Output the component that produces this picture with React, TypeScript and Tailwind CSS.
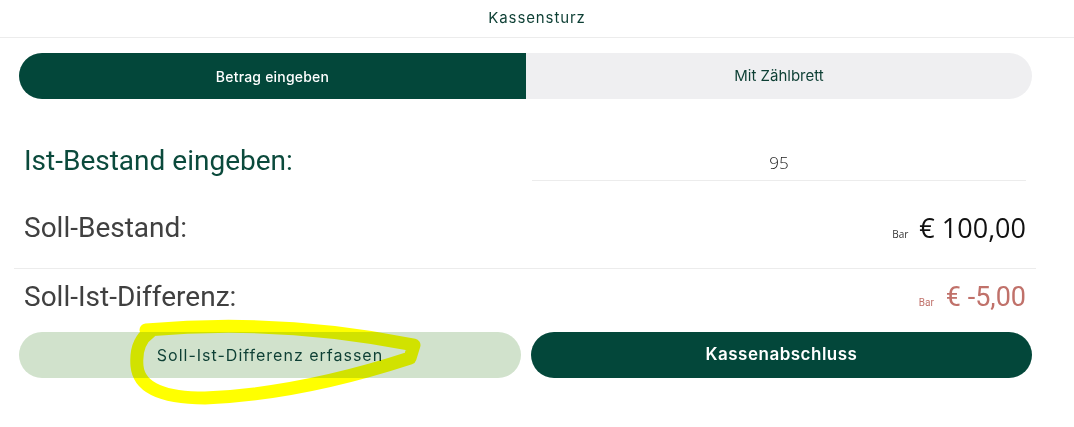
import React from 'react'

const green = 'bg-[#03473a]'

export default function App() {
  return (
    <div className="relative w-[1074px] h-[427px] bg-white overflow-hidden font-['Roboto',sans-serif]">
      <div className="h-[38px] flex items-center justify-center border-b border-[#ececec] text-[15px] text-[#0d3f34] font-['Inter',sans-serif] tracking-[0.9px]">
        Kassensturz
      </div>

      <div className="mt-[15px] ml-[19px] w-[1013px] h-[46px] flex rounded-full overflow-hidden bg-[#efeff1] font-['Inter',sans-serif] text-[14px]">
        <div className={`w-[507px] ${green} text-white font-medium tracking-[0.2px] flex items-center justify-center`}>Betrag eingeben</div>
        <div className="flex-1 text-[#0d3f34] text-[15px] flex items-center justify-center">Mit Zählbrett</div>
      </div>

      <div className="mt-[42px] h-[40px] flex items-center">
        <div className="ml-[24px] w-[508px] text-[28px] text-[#0b4a3c] leading-[40px]">Ist-Bestand eingeben:</div>
        <div className="w-[494px] h-[40px] pt-[5px] flex items-center justify-center border-b border-[#ececec] font-['Open_Sans',sans-serif] text-[17px] font-light text-[#222]">
          95
        </div>
      </div>

      <div className="mt-[27px] h-[40px] flex items-center justify-between ml-[24px] w-[1002px]">
        <div className="text-[28px] text-[#404040]">Soll-Bestand:</div>
        <div className="flex items-baseline gap-[11px] font-['Open_Sans',sans-serif]">
          <span className="text-[10px] text-[#333]">Bar</span>
          <span className="text-[27px] text-[#111]">€ 100,00</span>
        </div>
      </div>

      <div className="mt-[20px] ml-[14px] w-[1022px] h-px bg-[#ececec]" />

      <div className="mt-[8px] h-[40px] flex items-center justify-between ml-[24px] w-[1002px]">
        <div className="text-[28px] text-[#404040]">Soll-Ist-Differenz:</div>
        <div className="flex items-baseline gap-[12px] text-[#c0716a]">
          <span className="text-[10px]">Bar</span>
          <span className="text-[27px]">€ -5,00</span>
        </div>
      </div>

      <div className="mt-[15px] ml-[19px] w-[1013px] flex gap-[10px] font-['Inter',sans-serif]">
        <button className="w-[502px] h-[46px] rounded-full bg-[#d1e2cc] text-[#0d3f34] text-[16px] tracking-[1px]">
          Soll-Ist-Differenz erfassen
        </button>
        <button className={`flex-1 h-[46px] rounded-full ${green} text-white text-[17px] font-semibold tracking-[0.5px]`}>
          Kassenabschluss
        </button>
      </div>

      <svg className="absolute left-0 top-0 pointer-events-none mix-blend-multiply" width="1074" height="427">
        <path
          d="M 146 330 Q 280 318 414 345 L 410 358 Q 300 394 205 398 Q 140 398 137 366 Q 135 342 150 332"
          fill="none"
          stroke="#ffff00"
          strokeWidth="13"
          strokeLinecap="round"
          strokeLinejoin="round"
        />
      </svg>
    </div>
  )
}
